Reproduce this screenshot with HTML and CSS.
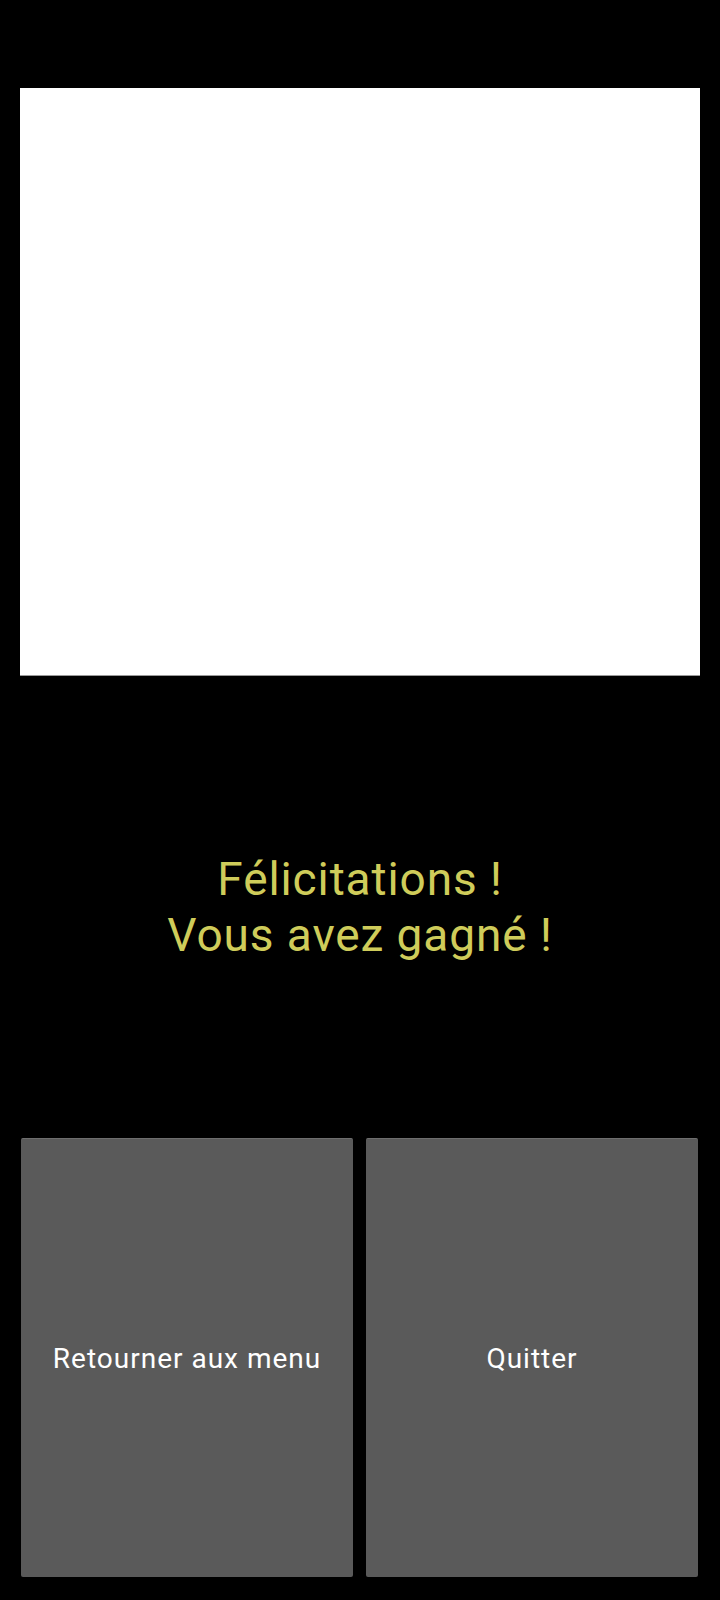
FILE: index.html
```html
<!DOCTYPE html>
<html lang="fr">
<head>
<meta charset="utf-8">
<title>Félicitations</title>
<link rel="stylesheet" href="styles.css">
</head>
<body>
<div class="screen">
  <div class="picture"></div>
  <div class="message">Félicitations !<br>Vous avez gagné !</div>
  <div class="actions">
    <button class="btn">Retourner aux menu</button>
    <button class="btn">Quitter</button>
  </div>
</div>
</body>
</html>
```

FILE: styles.css
```css
html, body {
  margin: 0;
  padding: 0;
  background: #000;
}
.screen {
  width: 720px;
  height: 1600px;
  box-sizing: border-box;
  padding-top: 88px;
  display: flex;
  flex-direction: column;
  font-family: Roboto, "Noto Sans", sans-serif;
}
.picture {
  margin: 0 20px;
  height: 587px;
  background: #fff;
  border-bottom: 1px solid #9a9a9a;
}
.message {
  margin-top: 175px;
  text-align: center;
  color: #cfcc5a;
  font-size: 46px;
  line-height: 56px;
  letter-spacing: 0.9px;
}
.actions {
  margin-top: 175px;
  padding: 0 22px 0 21px;
  display: flex;
  gap: 13px;
}
.btn {
  flex: 1;
  height: 439px;
  margin: 0;
  border: none;
  border-top: 1px solid #6e6e6e;
  border-radius: 2px;
  background: #5a5a5a;
  color: #fff;
  font-family: Roboto, "Noto Sans", sans-serif;
  font-size: 28px;
  letter-spacing: 1px;
  padding: 0;
}
```
